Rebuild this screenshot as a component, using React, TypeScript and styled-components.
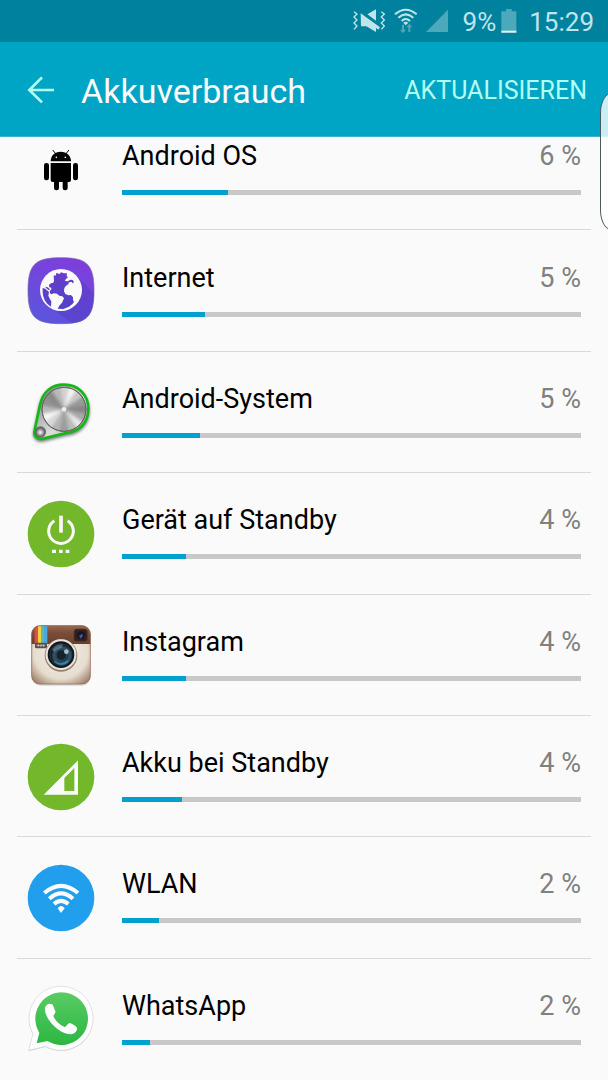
import React from 'react';
import styled, { createGlobalStyle } from 'styled-components';

const GlobalStyle = createGlobalStyle`
  * { box-sizing: border-box; }
  body { margin: 0; background: #fafafa; font-family: Roboto, "Liberation Sans", sans-serif; }
`;

const Screen = styled.div`
  position: relative;
  display: flex;
  flex-direction: column;
  min-height: 100vh;
  overflow: hidden;
  background: #fafafa;
`;

const StatusBar = styled.div`
  display: flex;
  flex: none;
  align-items: center;
  justify-content: flex-end;
  height: 42px;
  padding-right: 14px;
  background: #00829e;
  color: #c0e4eb;
  font-size: 26px;
  line-height: 32px;
  svg { display: block; flex: none; }
`;

const StatusIcons = styled.div`
  display: flex;
  align-items: center;
  gap: 8px;
  margin-right: 15px;
`;

const Battery = styled.div`
  display: flex;
  align-items: center;
  gap: 5px;
  margin-right: 12px;
`;

const StatusText = styled.span`
  padding-top: 2px;
`;

const Header = styled.header`
  display: flex;
  flex: none;
  align-items: center;
  height: 95px;
  padding: 4px 21px 0 27px;
  border-bottom: 1px solid #3bb3cb;
  background: #00a5c5;
`;

const BackButton = styled.button`
  display: block;
  flex: none;
  width: 54px;
  padding: 0 0 2px;
  border: 0;
  background: none;
  cursor: pointer;
  svg { display: block; }
`;

const Title = styled.h1`
  flex: 1;
  margin: 0;
  color: #fafafa;
  font-size: 34px;
  font-weight: 400;
  line-height: 40px;
`;

const RefreshButton = styled.button`
  padding: 0;
  border: 0;
  background: none;
  color: #b2fff4;
  font: 400 25px/32px Roboto, "Liberation Sans", sans-serif;
  cursor: pointer;
`;

const Viewport = styled.main`
  display: flex;
  flex: 1;
  flex-direction: column;
  overflow: hidden;
`;

/* The list is scrolled a little under the header. */
const AppList = styled.ul`
  display: flex;
  flex: 1;
  flex-direction: column;
  margin: -28px 17px 0;
  padding: 0;
  list-style: none;
`;

const Row = styled.li`
  display: flex;
  flex: 1 0 121px;
  align-items: center;
  padding: 1px 10px 0;
  border-bottom: 1px solid #d9d9d9;
  &:last-child { border-bottom-color: transparent; }
`;

const AppIcon = styled.svg`
  display: block;
  flex: none;
  width: 68px;
  height: 68px;
  margin-right: 27px;
`;

const Details = styled.div`
  flex: 1;
  padding-bottom: 4px;
`;

const Caption = styled.div`
  display: flex;
  justify-content: space-between;
  margin-bottom: 18px;
  color: #000;
  font-size: 27px;
  line-height: 32px;
`;

const Percent = styled.span`
  color: #808080;
`;

const Track = styled.div`
  height: 5px;
  background: #c8c8c8;
`;

const Fill = styled.div`
  height: 100%;
  background: #00a0cf;
`;

const EdgeHandle = styled.div`
  position: absolute;
  top: 93px;
  right: -14px;
  width: 22px;
  height: 137px;
  border: 1px solid #4c5a5e;
  border-radius: 12px / 22px;
  background: rgba(255, 255, 255, 0.8);
`;

const AndroidIcon = () => (
  <AppIcon viewBox="81 285 204 204" aria-hidden="true">
    <path d="M152 361C152 344 164 332 182 332s31 12 31 29z" />
    <path d="M159 328l8 10M206 328l-8 10" stroke="#000" strokeWidth="3" strokeLinecap="round" />
    <circle cx="169" cy="349" r="2.5" fill="#fafafa" />
    <circle cx="196" cy="349" r="2.5" fill="#fafafa" />
    <path d="M152 366h61v51q0 6-6 6h-49q-6 0-6-6z" />
    <rect x="132" y="366" width="15" height="52" rx="7" />
    <rect x="219" y="366" width="15" height="52" rx="7" />
    <rect x="162" y="410" width="15" height="38" rx="7" />
    <rect x="188" y="410" width="15" height="38" rx="7" />
  </AppIcon>
);

const InternetIcon = () => (
  <AppIcon viewBox="36 35 204 204" aria-hidden="true">
    <defs>
      <linearGradient id="net" x1="0.7" y1="0" x2="0.3" y2="1">
        <stop offset="0" stopColor="#803ddb" />
        <stop offset="1" stopColor="#5b55dd" />
      </linearGradient>
      <linearGradient id="ocean" gradientUnits="userSpaceOnUse" x1="138" y1="75" x2="138" y2="195">
        <stop offset="0" stopColor="#6c3bc9" />
        <stop offset="1" stopColor="#4f44c8" />
      </linearGradient>
      <clipPath id="netShape">
        <path d="M138 37C216 37 237 57 237 136S216 235 138 235 39 215 39 136 60 37 138 37z" />
      </clipPath>
    </defs>
    <path d="M138 37C216 37 237 57 237 136S216 235 138 235 39 215 39 136 60 37 138 37z" fill="url(#net)" stroke="#7063a8" strokeWidth="2" />
    <path d="M184 92l60 60v90h-60l-90-63z" fill="#4a35b8" opacity=".35" clipPath="url(#netShape)" />
    <circle cx="138" cy="134" r="63" fill="#fafafa" />
    <g fill="url(#ocean)">
      <path d="M116 90l6 1 2-8 10 3 4-5 9 3 9 0-1 8 4 5-6 3-3 7 9 1 2 8-8 5-5 7-1 10 4 8 9 4 8-1 6 7 0 8 3 6-4 5-11 9-17 7-17-1 5-9 8-9 6-13-5-6-9-2-7-6-10-1-6 3-5-3-1-6 5-6 0-5-6-1-1-8 6-4 7-2 2-6z" />
      <path d="M83 128l8 2 5 5 6 5-2 11 5 11 4 6-1 16q-12-7-18-18-9-17-7-38z" />
      <path d="M158 108l8-5 7 1 4 6-4 4-4-5-9 3zM90 124l8 2 7 6-3 3-8-6z" />
    </g>
  </AppIcon>
);

const SystemIcon = () => {
  const sectors = ['#888', '#aaa', '#e8e8e8', '#bbb', '#9d9d9d', '#b5b5b5', '#d8d8d8', '#f7f7f7', '#bababa', '#929292', '#8a8a8a', '#b8b8b8', '#d2d2d2', '#f3f3f3', '#c8c8c8', '#9a9a9a'];
  return (
    <AppIcon viewBox="36 24 204 204" aria-hidden="true">
      <defs>
        <filter id="gearShadow" x="-20%" y="-20%" width="140%" height="140%">
          <feGaussianBlur stdDeviation="5" />
        </filter>
        <filter id="metal"><feGaussianBlur stdDeviation="4" /></filter>
        <linearGradient id="plate" x2="1" y2="1">
          <stop offset="0" stopColor="#777" />
          <stop offset=".6" stopColor="#ddd" />
          <stop offset="1" stopColor="#888" />
        </linearGradient>
        <clipPath id="dial"><circle cx="147" cy="118" r="65" /></clipPath>
        <radialGradient id="knob">
          <stop offset="0" stopColor="#fff" />
          <stop offset="1" stopColor="#5c5c5c" />
        </radialGradient>
      </defs>
      <path d="M75 105C84 64 111 44 147 44C190 44 220 74 220 117C220 162 190 185 153 189L84 206C68 210 54 198 59 181z" transform="translate(0 5)" fill="#444" stroke="#444" strokeWidth="8" opacity=".7" filter="url(#gearShadow)" />
      <path d="M75 105C84 64 111 44 147 44C190 44 220 74 220 117C220 162 190 185 153 189L84 206C68 210 54 198 59 181z" fill="url(#plate)" stroke="#12b916" strokeWidth="8" />
      <circle cx="147" cy="118" r="67" fill="#555" />
      <g clipPath="url(#dial)">
        <g filter="url(#metal)">
          {sectors.map((color, i) => (
            <path key={i} d="M147 118L227 102L227 134z" fill={color} transform={`rotate(${i * 22.5} 147 118)`} />
          ))}
        </g>
      </g>
      <circle cx="147" cy="118" r="66" fill="none" stroke="#666" strokeWidth="3" />
      <circle cx="147" cy="118" r="7" fill="#fff" opacity=".8" />
      <circle cx="76" cy="186" r="17" fill="#666" />
      <circle cx="76" cy="187" r="14" fill="url(#knob)" />
    </AppIcon>
  );
};

const StandbyIcon = () => (
  <AppIcon viewBox="36 28 204 204" aria-hidden="true">
    <circle cx="138" cy="130" r="100" fill="#73b72b" />
    <path d="M118 90A37 37 0 1 0 158 90" fill="none" stroke="#fafafa" strokeWidth="9" />
    <path d="M138 75v51" stroke="#fafafa" strokeWidth="11" />
    <path d="M111 177h12v10h-12zM132 177h11v10h-11zM152 177h11v10h-11z" fill="#fafafa" />
  </AppIcon>
);

const InstagramIcon = () => (
  <AppIcon viewBox="36 27 204 204" aria-hidden="true">
    <defs>
      <radialGradient id="leather" cx=".5" cy=".45" r=".7">
        <stop offset="0" stopColor="#f6f0e7" />
        <stop offset=".65" stopColor="#e6ddd0" />
        <stop offset="1" stopColor="#967359" />
      </radialGradient>
      <linearGradient id="brown" x2="0" y2="1">
        <stop offset="0" stopColor="#9a6c51" />
        <stop offset=".4" stopColor="#7b4d38" />
        <stop offset="1" stopColor="#68402f" />
      </linearGradient>
      <radialGradient id="lens" cx=".55" cy=".55">
        <stop offset="0" stopColor="#16252e" />
        <stop offset=".45" stopColor="#1e3a4c" />
        <stop offset=".75" stopColor="#2f5870" />
        <stop offset="1" stopColor="#151b20" />
      </radialGradient>
      <clipPath id="camera"><rect x="49" y="40" width="178" height="177" rx="27" /></clipPath>
    </defs>
    <rect x="49" y="43" width="178" height="178" rx="27" fill="#aaa" opacity=".45" />
    <g clipPath="url(#camera)">
      <rect x="49" y="40" width="178" height="177" fill="url(#leather)" />
      <rect x="49" y="40" width="178" height="56" fill="url(#brown)" />
      <path d="M59 40h10v54H59z" fill="#dc4d4b" />
      <path d="M69 40h9v54h-9z" fill="#eed23f" />
      <path d="M78 40h9v54h-9z" fill="#62b9a0" />
      <path d="M87 40h10v54H87z" fill="#4ba7e0" />
    </g>
    <rect x="50" y="41" width="176" height="175" rx="26" fill="none" stroke="#8b674f" strokeWidth="2" />
    <rect x="60" y="92" width="36" height="17" rx="5" fill="#54504b" />
    <path d="M65 100h25M70 96v9M78 97v8M86 97v8" stroke="#ddd" strokeWidth="2" />
    <rect x="177" y="51" width="40" height="37" rx="8" fill="#30231f" stroke="#5b3a2d" strokeWidth="2" />
    <circle cx="198" cy="70" r="12" fill="#16172b" />
    <path d="M192 72l9-7 3 7-7 8z" fill="#595092" />
    <circle cx="138" cy="130" r="49" fill="#97826f" />
    <circle cx="138" cy="128" r="46" fill="#e8e5df" />
    <circle cx="138" cy="128" r="40" fill="#11171b" />
    <circle cx="138" cy="128" r="33" fill="url(#lens)" stroke="#31424c" strokeWidth="2" />
    <circle cx="139" cy="129" r="16" fill="#16232c" stroke="#2d4e60" strokeWidth="3" />
    <path d="M111 113q12-18 33-16l-5 12q-13 1-21 11z" fill="#819daa" opacity=".55" />
    <circle cx="154" cy="119" r="7" fill="#cbd9df" opacity=".8" />
    <path d="M118 146q20 16 40-2l3 6q-20 17-43 1z" fill="#3085ad" />
  </AppIcon>
);

const CellIcon = () => (
  <AppIcon viewBox="36 22 204 204" aria-hidden="true">
    <circle cx="138" cy="124" r="100" fill="#73b72b" />
    <path d="M189 74V177H86zM178 97L148 127V166H178z" fill="#fafafa" fillRule="evenodd" />
  </AppIcon>
);

const WlanIcon = () => (
  <AppIcon viewBox="36 27 204 204" aria-hidden="true">
    <circle cx="138" cy="129" r="100" fill="#219fec" />
    <g fill="none" stroke="#fafafa" strokeWidth="12">
      <path d="M88 114Q138 71 189 114" />
      <path d="M103 131Q138 99 174 131" />
      <path d="M117 147Q138 128 160 147" />
    </g>
    <path d="M128 160Q138 146 149 160L138 174z" fill="#fafafa" />
  </AppIcon>
);

const WhatsAppIcon = () => (
  <AppIcon viewBox="36 31 204 204" aria-hidden="true">
    <defs>
      <linearGradient id="wa" x2="0" y2="1">
        <stop offset="0" stopColor="#5ccb64" />
        <stop offset=".5" stopColor="#41c153" />
        <stop offset="1" stopColor="#2db742" />
      </linearGradient>
    </defs>
    <path d="M41 230L54 179A96 96 0 1 1 92 217z" fill="#aaa" opacity=".45" />
    <path d="M41 227L54 177A96 96 0 1 1 92 215z" fill="#fff" stroke="#d5d5d5" strokeWidth="2" />
    <path d="M65 206L73 174A79 79 0 1 1 98 199z" fill="url(#wa)" />
    <path d="M105 88C99 86 93 92 90 99C88 111 95 130 112 149C130 169 153 180 168 179C180 177 187 169 186 159C180 152 171 148 165 145C158 145 155 156 149 157C136 153 119 136 115 124C117 119 122 116 121 110C118 103 115 94 112 89Q109 87 105 88z" fill="#fff" />
  </AppIcon>
);

const apps = [
  { name: 'Android OS', percent: 6, fill: 23, Icon: AndroidIcon },
  { name: 'Internet', percent: 5, fill: 18, Icon: InternetIcon },
  { name: 'Android-System', percent: 5, fill: 17, Icon: SystemIcon },
  { name: 'Gerät auf Standby', percent: 4, fill: 14, Icon: StandbyIcon },
  { name: 'Instagram', percent: 4, fill: 14, Icon: InstagramIcon },
  { name: 'Akku bei Standby', percent: 4, fill: 13, Icon: CellIcon },
  { name: 'WLAN', percent: 2, fill: 8, Icon: WlanIcon },
  { name: 'WhatsApp', percent: 2, fill: 6, Icon: WhatsAppIcon },
];

export default function App() {
  return (
    <Screen>
      <GlobalStyle />
      <StatusBar>
        <StatusIcons>
          <svg width="33" height="24" viewBox="37 27 99 72" aria-hidden="true">
            <path d="M80 43L106 28V62z" fill="#c0e4eb" />
            <path d="M60 40L118 82l-5 7-7-5v12L77 79H61z" fill="#c0e4eb" />
            <path d="M40 35l9 7-9 9 9 9-9 9 9 9-9 10M122 35l9 7-9 9 9 9-9 9 9 9-9 10" fill="none" stroke="#c0e4eb" strokeWidth="4" />
          </svg>
          <svg width="24" height="26" viewBox="166 22 72 78" aria-hidden="true">
            <g fill="none" stroke="#c0e4eb" strokeWidth="6">
              <path d="M169 41Q201 13 234 41" />
              <path d="M179 51Q201 31 224 51" />
              <path d="M189 61Q201 49 214 61" />
            </g>
            <path d="M194 66q7-6 15 0l-8 8z" fill="#c0e4eb" />
            <path d="M190 72h6v15h6l-9 11-9-11h6zM209 94h6V80h6l-9-11-9 11h6z" fill="#4ca8bb" />
          </svg>
          <svg width="22" height="24" viewBox="257 27 66 72" aria-hidden="true">
            <path d="M323 29v67h-66z" fill="#4ca8bb" />
          </svg>
        </StatusIcons>
        <Battery>
          <StatusText>9%</StatusText>
          <svg width="16" height="24" viewBox="488 25 48 72" aria-hidden="true">
            <path d="M489 32h14v-7h17v7h14v64h-45z" fill="#4ca8bb" />
            <path d="M489 90h45v6h-45z" fill="#e2f4f7" />
          </svg>
        </Battery>
        <StatusText>15:29</StatusText>
      </StatusBar>
      <Header>
        <BackButton type="button" aria-label="Zurück">
          <svg width="28" height="28" viewBox="81 106 84 84" aria-hidden="true">
            <path d="M162 148H87M126 110L88 148l38 37" fill="none" stroke="#b2fff4" strokeWidth="8" />
          </svg>
        </BackButton>
        <Title>Akkuverbrauch</Title>
        <RefreshButton type="button">AKTUALISIEREN</RefreshButton>
      </Header>
      <Viewport>
        <AppList>
          {apps.map(({ name, percent, fill, Icon }) => (
            <Row key={name}>
              <Icon />
              <Details>
                <Caption>
                  <span>{name}</span>
                  <Percent>{percent} %</Percent>
                </Caption>
                <Track role="progressbar" aria-label={name} aria-valuenow={percent}>
                  <Fill style={{ width: `${fill}%` }} />
                </Track>
              </Details>
            </Row>
          ))}
        </AppList>
      </Viewport>
      <EdgeHandle />
    </Screen>
  );
}
